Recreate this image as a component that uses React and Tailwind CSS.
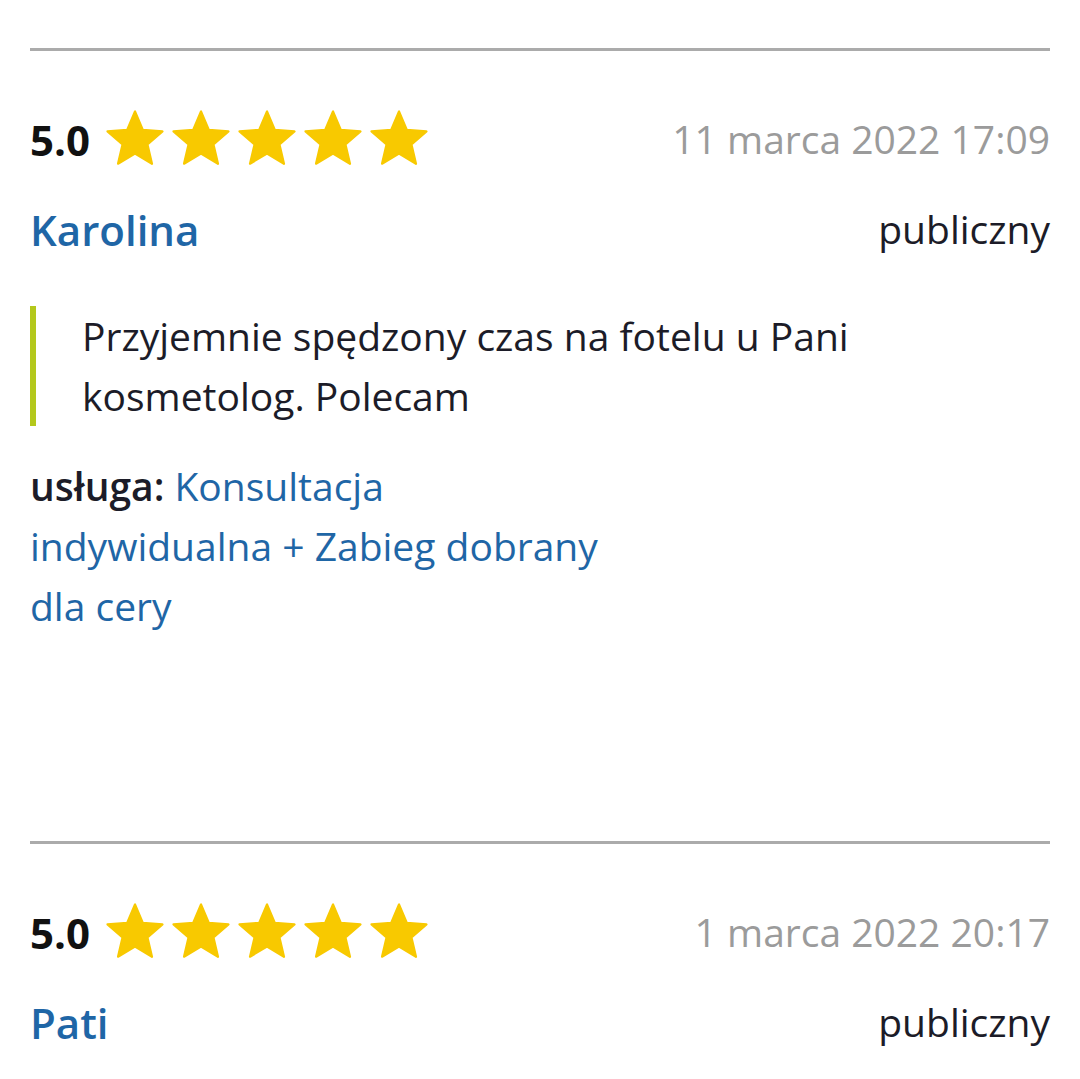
const reviews = [
  {
    id: 1,
    rating: '5.0',
    date: '11 marca 2022 17:09',
    author: 'Karolina',
    visibility: 'publiczny',
    comment: 'Przyjemnie spędzony czas na fotelu u Pani kosmetolog. Polecam',
    service: 'Konsultacja indywidualna + Zabieg dobrany dla cery',
  },
  {
    id: 2,
    rating: '5.0',
    date: '1 marca 2022 20:17',
    author: 'Pati',
    visibility: 'publiczny',
    comment: '',
    service: '',
  },
]

function Star() {
  return (
    <svg viewBox="0 0 24 24" className="w-[66px] h-[66px] shrink-0">
      <path
        d="M12 17.27L18.18 21l-1.64-7.03L22 9.24l-7.19-.61L12 2 9.19 8.63 2 9.24l5.46 4.73L5.82 21z"
        fill="#f8c900"
        stroke="#f8c900"
        strokeWidth="0.8"
        strokeLinejoin="round"
      />
    </svg>
  )
}

function Review({ r }) {
  return (
    <div className="border-t-[3px] border-[#ababab] pt-[57px] min-h-[793px]">
      <div className="flex items-center justify-between h-[62px]">
        <div className="flex items-center">
          <span className="text-[42px] font-bold text-[#111] mr-[12px]">{r.rating}</span>
          <div className="flex">
            {[0, 1, 2, 3, 4].map(i => <Star key={i} />)}
          </div>
        </div>
        <span className="text-[39px] text-[#9b9b9b]">{r.date}</span>
      </div>

      <div className="flex items-center justify-between h-[60px] mt-[29px]">
        <span className="text-[42px] font-semibold text-[#1f66a6]">{r.author}</span>
        <span className="text-[39px] text-[#1c1c28]">{r.visibility}</span>
      </div>

      {r.comment && (
        <blockquote className="mt-[47px] border-l-[6px] border-[#b4c81c] pl-[46px] text-[39px] leading-[60px] text-[#1c1c28] max-w-[840px]">
          {r.comment}
        </blockquote>
      )}

      {r.service && (
        <p className="mt-[30px] text-[39px] leading-[60px] max-w-[600px]">
          <span className="font-semibold text-[#1c1c28]">usługa: </span>
          <a className="text-[#1f66a6]">{r.service}</a>
        </p>
      )}
    </div>
  )
}

export default function App() {
  return (
    <div className="bg-white h-[1079px] px-[30px] pt-[48px] overflow-hidden" style={{ fontFamily: '"Open Sans", sans-serif' }}>
      {reviews.map(r => <Review key={r.id} r={r} />)}
    </div>
  )
}
